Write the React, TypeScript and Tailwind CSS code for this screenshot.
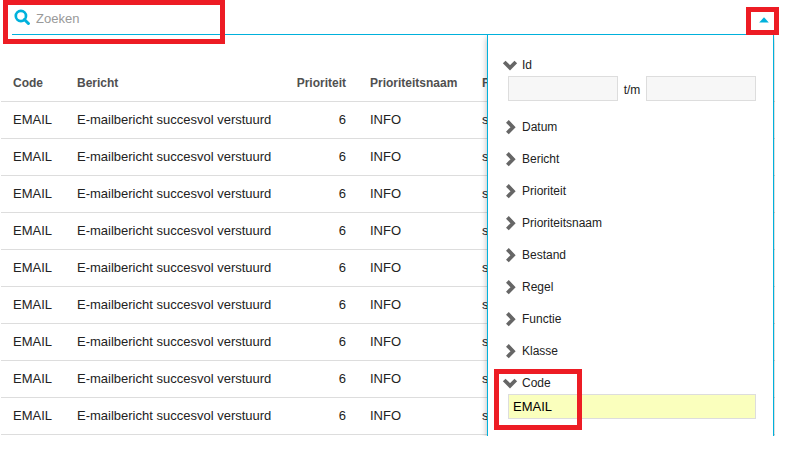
import React, { useState } from 'react';

const rows = [1, 2, 3, 4, 5, 6, 7, 8, 9];

const filters = [
  { name: 'Id', type: 'range' },
  { name: 'Datum', type: 'range' },
  { name: 'Bericht', type: 'text' },
  { name: 'Prioriteit', type: 'range' },
  { name: 'Prioriteitsnaam', type: 'text' },
  { name: 'Bestand', type: 'text' },
  { name: 'Regel', type: 'range' },
  { name: 'Functie', type: 'text' },
  { name: 'Klasse', type: 'text' },
  { name: 'Code', type: 'text' },
];

function SearchIcon() {
  return (
    <svg viewBox="0 0 16 16" className="size-4 shrink-0" fill="none" stroke="#00b1dc">
      <circle cx="6.9" cy="7" r="5.1" strokeWidth="2.7" />
      <path d="M10.4 10.5 L14.4 14.5" strokeWidth="3" strokeLinecap="round" />
    </svg>
  );
}

function Chevron({ open }: { open: boolean }) {
  return (
    <svg viewBox="0 0 16 16" className="size-4 shrink-0" fill="none" stroke="#666666" strokeWidth="3.8">
      {open ? <path d="M2.2 5 L8 10.8 L13.8 5" /> : <path d="M5.4 2.4 L11 8.2 L5.4 14" />}
    </svg>
  );
}

function Filter({ name, type, open, value, onToggle, onChange }: {
  name: string;
  type: string;
  open: boolean;
  value: string;
  onToggle: () => void;
  onChange: (value: string) => void;
}) {
  const field = 'h-[25px] min-w-0 flex-1 border border-[#dddddd] px-1 text-[13px] text-black outline-none';

  return (
    <div className={open ? 'pb-[5px]' : ''}>
      <button type="button" aria-expanded={open} onClick={onToggle} className="flex h-[22px] items-center gap-1 text-xs">
        <Chevron open={open} />
        {name}
      </button>
      {open && type === 'range' && (
        <div className="ml-[6px] flex items-center">
          <input aria-label={`${name} van`} className={`${field} bg-[#f7f7f7]`} />
          <span className="w-7 pt-[3px] text-center text-xs">t/m</span>
          <input aria-label={`${name} tot en met`} className={`${field} bg-[#f7f7f7]`} />
        </div>
      )}
      {open && type === 'text' && (
        <div className="ml-[6px] flex">
          <input
            aria-label={name}
            value={value}
            onChange={(e) => onChange(e.target.value)}
            className={`${field} ${value ? 'bg-[#faffbd]' : 'bg-[#f7f7f7]'}`}
          />
        </div>
      )}
    </div>
  );
}

function App() {
  const [panelOpen, setPanelOpen] = useState(true);
  const [opened, setOpened] = useState(['Id', 'Code']);
  const [values, setValues] = useState<Record<string, string>>({ Code: 'EMAIL' });

  const toggle = (name: string) =>
    setOpened(opened.includes(name) ? opened.filter((n) => n !== name) : [...opened, name]);

  return (
    <div className="relative bg-white font-['Liberation_Sans',Arial,sans-serif] text-[#222222]">
      <div className="ml-3 mr-[11px] flex h-[35px] items-center border-b border-[#00b1dc] pl-[2px]">
        <SearchIcon />
        <input
          type="search"
          aria-label="Zoeken"
          placeholder="Zoeken"
          className="ml-[6px] mt-[3px] min-w-0 flex-1 text-[13px] outline-none placeholder:text-[#999999]"
        />
        <button
          type="button"
          aria-label="Filters"
          aria-expanded={panelOpen}
          onClick={() => setPanelOpen(!panelOpen)}
          className="mr-[6px] mt-[5px] flex h-5 items-center"
        >
          <svg viewBox="0 0 10 6" className="h-[6px] w-[10px]" fill="#00b1dc">
            <path d="M5 0.2 L9.8 5.6 H0.2 Z" />
          </svg>
        </button>
      </div>

      <div className="relative ml-px mr-[11px] overflow-hidden pb-px pt-[29px]">
        <table className="w-full table-fixed whitespace-nowrap text-left text-[13px] [&_td]:px-3 [&_th]:px-3">
          <colgroup>
            <col className="w-16" />
            <col className="w-[218px]" />
            <col className="w-[75px]" />
            <col className="w-28" />
            <col />
          </colgroup>
          <thead>
            <tr className="h-[37px] border-b border-[#dddddd] text-xs text-[#505050] [&>th]:pt-[2px] [&>th]:font-bold">
              <th>Code</th>
              <th>Bericht</th>
              <th><span className="flex justify-end">Prioriteit</span></th>
              <th>Prioriteitsnaam</th>
              <th>Functie</th>
            </tr>
          </thead>
          <tbody>
            {rows.map((row) => (
              <tr key={row} className="h-[37px] border-b border-[#dddddd]">
                <td>EMAIL</td>
                <td>E-mailbericht succesvol verstuurd</td>
                <td className="text-right">6</td>
                <td>INFO</td>
                <td>s</td>
              </tr>
            ))}
          </tbody>
        </table>

        {panelOpen && (
          <div className="absolute inset-y-0 right-px flex w-[287px] flex-col gap-[10px] border-x border-[#00b1dc] bg-white pl-[14px] pr-[17px] pt-[19px] shadow-[0_3px_6px_rgba(0,0,0,0.3)]">
            {filters.map((filter) => (
              <Filter
                key={filter.name}
                name={filter.name}
                type={filter.type}
                open={opened.includes(filter.name)}
                value={values[filter.name] ?? ''}
                onToggle={() => toggle(filter.name)}
                onChange={(value) => setValues({ ...values, [filter.name]: value })}
              />
            ))}
          </div>
        )}
      </div>

      {/* highlighted areas */}
      <div className="pointer-events-none absolute left-[3px] top-0 h-11 w-[222px] border-[5px] border-[#ed1c24]" />
      <div className="pointer-events-none absolute right-[7px] top-[7px] h-7 w-[33px] border-[5px] border-[#ed1c24]" />
      <div className="pointer-events-none absolute right-[204px] top-[369px] h-[61px] w-[88px] border-[5px] border-[#ed1c24]" />
    </div>
  );
}

export default App;
